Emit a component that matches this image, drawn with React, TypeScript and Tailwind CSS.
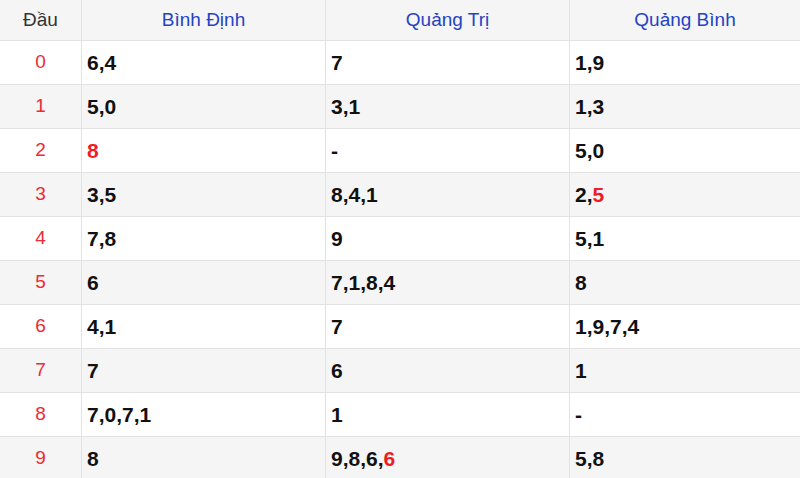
const heads = ["Bình Định", "Quảng Trị", "Quảng Bình"];

// each value: plain text, red tail in brackets [x]
const rows: string[][] = [
  ["6,4", "7", "1,9"],
  ["5,0", "3,1", "1,3"],
  ["[8]", "-", "5,0"],
  ["3,5", "8,4,1", "2,[5]"],
  ["7,8", "9", "5,1"],
  ["6", "7,1,8,4", "8"],
  ["4,1", "7", "1,9,7,4"],
  ["7", "6", "1"],
  ["7,0,7,1", "1", "-"],
  ["8", "9,8,6,[6]", "5,8"],
];

function Value({ text }: { text: string }) {
  const m = text.match(/^(.*?)\[(.+)\]$/);
  if (!m) return <>{text}</>;
  return (
    <>
      {m[1]}
      <span className="text-[#ee1c25]">{m[2]}</span>
    </>
  );
}

export default function App() {
  return (
    <div className="w-[800px] h-[478px] overflow-hidden bg-white font-['Liberation_Sans',Arial,sans-serif] text-[19px]">
      <div className="grid grid-cols-[82px_244px_244px_230px]">
        <div className="h-[41px] flex items-center justify-center bg-[#f5f5f5] border-r border-b border-[#e2e2e2] text-[#333]">
          Đầu
        </div>
        {heads.map((h, i) => (
          <div
            key={h}
            className={`h-[41px] flex items-center justify-center bg-[#f5f5f5] border-b border-[#e2e2e2] text-[#2443c4] ${i < 2 ? "border-r" : ""}`}
          >
            {h}
          </div>
        ))}
        {rows.map((r, i) => {
          const bg = i % 2 === 1 ? "bg-[#f5f5f5]" : "bg-white";
          return [
            <div
              key={`h${i}`}
              className={`h-[44px] flex items-center justify-center border-r border-b border-[#e2e2e2] text-[#ee2a33] ${bg}`}
            >
              {i}
            </div>,
            ...r.map((v, j) => (
              <div
                key={`${i}-${j}`}
                className={`h-[44px] flex items-center pl-[5px] pt-[1px] border-b border-[#e2e2e2] text-[21px] font-bold text-[#111] ${bg} ${j < 2 ? "border-r" : ""}`}
              >
                <Value text={v} />
              </div>
            )),
          ];
        })}
      </div>
    </div>
  );
}
